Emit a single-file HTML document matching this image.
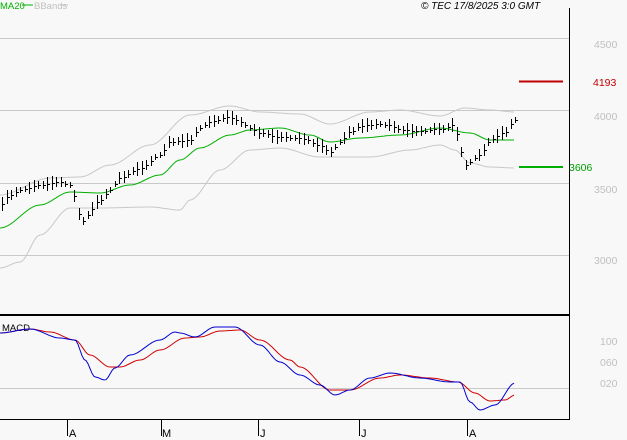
<!DOCTYPE html><html><head><style>
body{margin:0;background:#f8f8f8;width:627px;height:440px;overflow:hidden;font-family:"Liberation Sans",sans-serif}
</style></head><body>
<svg id="s" width="627" height="440" xmlns="http://www.w3.org/2000/svg" style="position:absolute;left:0;top:0">
<rect width="627" height="440" fill="#f8f8f8"/>
<g stroke="#c8c8c8" stroke-width="1">
<line x1="0" y1="38.5" x2="569" y2="38.5"/><line x1="0" y1="110.5" x2="569" y2="110.5"/>
<line x1="0" y1="183.5" x2="569" y2="183.5"/><line x1="0" y1="255.5" x2="569" y2="255.5"/>
<line x1="0" y1="388.5" x2="569" y2="388.5"/></g>
<line x1="569.5" y1="8" x2="569.5" y2="420" stroke="#000"/>
<line x1="0" y1="315" x2="570" y2="315" stroke="#000" stroke-width="2"/>
<line x1="0" y1="419.5" x2="570" y2="419.5" stroke="#000"/>
<g stroke="#000"><line x1="67.5" y1="420" x2="67.5" y2="436"/><line x1="161.5" y1="420" x2="161.5" y2="436"/><line x1="258.5" y1="420" x2="258.5" y2="436"/><line x1="359.5" y1="420" x2="359.5" y2="436"/><line x1="467.5" y1="420" x2="467.5" y2="436"/></g>
<g font-size="11" fill="#000"><text x="69" y="437">A</text><text x="162" y="437">M</text><text x="260" y="437">J</text><text x="361" y="437">J</text><text x="469" y="437">A</text></g>
<g font-size="10.5" fill="#c0c0c0"><text x="594" y="48">4500</text><text x="594" y="120">4000</text><text x="594" y="193">3500</text><text x="594" y="264">3000</text>
<text x="600" y="345">100</text><text x="600" y="366">060</text><text x="600" y="387">020</text></g>
<line x1="519" y1="81.5" x2="563" y2="81.5" stroke="#c00000" stroke-width="2"/>
<text x="593" y="86" font-size="10.5" fill="#c00000">4193</text>
<line x1="519" y1="167" x2="563" y2="167" stroke="#00b000" stroke-width="2"/>
<text x="569" y="171" font-size="10.5" fill="#00a000">3606</text>
<text x="0" y="9" font-size="9.5" fill="#00b000">MA20</text><line x1="22" y1="5" x2="33" y2="5" stroke="#00b000"/>
<text x="34" y="9" font-size="9.5" fill="#c0c0c0">BBands</text><line x1="60" y1="5" x2="68" y2="5" stroke="#c0c0c0"/>
<text x="421" y="9" font-size="10" font-style="italic" fill="#000">© TEC 17/8/2025 3:0 GMT</text>
<text x="2" y="331" font-size="9.5" fill="#000">MACD</text>
<g id="d"></g>
</svg>
<script>
function f(a,x){for(var i=1;i<a.length;i++){if(x<=a[i][0]){var t=(x-a[i-1][0])/(a[i][0]-a[i-1][0]);t=t*t*(3-2*t);return a[i-1][1]+t*(a[i][1]-a[i-1][1]);}}return a[a.length-1][1];}
function pl(a,c){var s=[];for(var x=0;x<=a[a.length-1][0];x+=2)s.push(x+','+f(a,x).toFixed(1));return '<polyline fill="none" stroke="'+c+'" stroke-width="1" points="'+s.join(' ')+'"/>'}
var up=[[0,268],[20,262],[40,235],[70,208],[100,208],[150,207],[180,210],[190,200],[220,170],[250,150],[280,148],[320,157],[370,157],[410,150],[440,145],[455,150],[470,163],[490,167],[515,168]];
var ub=[[0,195],[50,178],[80,177],[110,165],[150,145],[190,115],[230,106],[260,112],[300,114],[330,124],[370,112],[400,110],[440,116],[465,108],[490,110],[515,112]];
var ma=[[0,228],[40,205],[70,192],[100,193],[130,185],[160,175],[180,160],[200,148],[230,135],[250,130],[280,128],[310,135],[330,142],[360,138],[400,135],[440,128],[470,133],[490,140],[515,140]];
var bl=[[0,333],[30,329],[60,338],[75,340],[85,360],[95,377],[105,380],[115,368],[130,355],[160,340],[175,332],[180,333],[195,337],[215,327],[235,327],[260,345],[280,362],[300,375],[320,385],[335,395],[350,390],[370,378],[390,373],[420,378],[450,382],[460,382],[470,402],[480,410],[495,405],[515,383]];
var rd=[[0,333],[30,329],[50,332],[75,340],[90,355],[110,367],[120,367],[140,360],[160,350],[185,338],[200,337],[220,331],[240,330],[260,340],[290,360],[300,367],[330,390],[350,390],[380,378],[400,375],[430,378],[458,382],[475,393],[490,401],[505,400],[515,395]];
var pr=[[0,205],[10,195],[20,190],[40,185],[60,182],[70,185],[80,215],[85,225],[90,210],[100,200],[110,190],[120,178],[140,168],[160,155],[170,142],[190,140],[200,128],[210,122],[230,117],[240,122],[250,128],[260,133],[280,137],[300,138],[320,145],[330,152],[340,142],[350,132],[360,126],[380,124],[390,125],[400,130],[420,131],[440,129],[455,125],[460,150],[465,165],[480,155],[490,140],[505,132],[515,120]];
var h=pl(up,'#c8c8c8')+pl(ub,'#c8c8c8')+pl(ma,'#00b000')+pl(rd,'#d00000')+pl(bl,'#0000d0');
for(var x=2;x<=515;x+=4.5){var xi=Math.round(x);var y=Math.round(f(pr,xi));var r=3+((xi*7)%5);h+='<line x1="'+(xi+.5)+'" y1="'+(y-r)+'" x2="'+(xi+.5)+'" y2="'+(y+r)+'" stroke="#000"/><line x1="'+(xi+1)+'" y1="'+(y+.5)+'" x2="'+(xi+3)+'" y2="'+(y+.5)+'" stroke="#000"/>';}
document.getElementById('d').innerHTML=h;
</script>
</body></html>
